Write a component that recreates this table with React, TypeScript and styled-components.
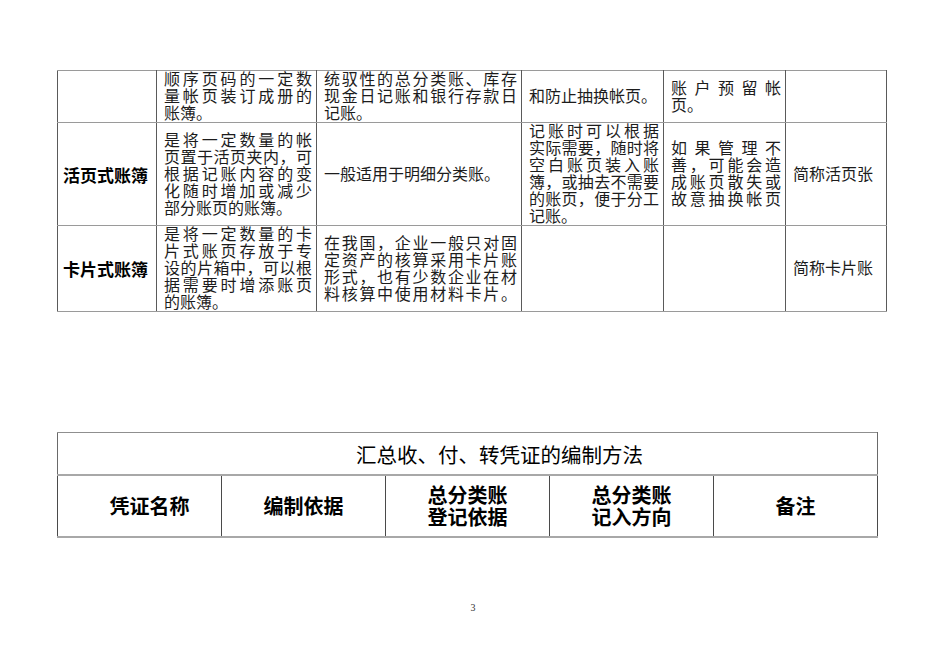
import React from "react";
import styled, { createGlobalStyle } from "styled-components";

const GlobalStyle = createGlobalStyle`
    html, body {
        margin: 0;
        padding: 0;
        background: #ffffff;
    }
    body {
        font-family: "Liberation Serif", "Noto Sans CJK SC", serif;
        color: #111111;
    }
`;

const Page = styled.div`
    width: 950px;
    min-height: 672px;
    padding-top: 70px;
    box-sizing: border-box;
    display: flex;
    flex-direction: column;
`;

const LedgerTable = styled.table`
    margin-left: 57px;
    width: 829px;
    border-collapse: collapse;
    table-layout: fixed;
`;

const Row = styled.tr<{ $h: number }>`
    height: ${(p) => p.$h}px;
`;

const Cell = styled.td`
    border-top: 1px solid #9a9a9a;
    border-bottom: 1px solid #9a9a9a;
    border-left: 1px solid #5a5a5a;
    border-right: 1px solid #5a5a5a;
    padding: 0 4px 0 7px;
    vertical-align: middle;
    font-family: "Liberation Serif", "Noto Sans CJK SC", serif;
    font-size: 16px;
    line-height: 17px;
    color: #1c1c1c;
`;

const LabelCell = styled(Cell)`
    padding-left: 5px;
    font-family: "Noto Sans CJK SC", sans-serif;
    font-size: 17px;
    font-weight: 700;
    color: #000000;
    white-space: nowrap;
`;

const Line = styled.div<{ $spread: boolean }>`
    white-space: nowrap;
    text-align: ${(p) => (p.$spread ? "justify" : "left")};
    text-align-last: ${(p) => (p.$spread ? "justify" : "left")};
`;

const MethodTable = styled.table`
    margin: 120px 0 0 57px;
    width: 821px;
    border-collapse: collapse;
    table-layout: fixed;
`;

const TitleCell = styled.th`
    height: 41px;
    border-top: 1px solid #8f8f8f;
    border-bottom: 2px solid #a8a8a8;
    border-left: 1px solid #6a6a6a;
    border-right: 1px solid #6a6a6a;
    padding: 0 0 0 64px;
    font-family: "Noto Sans CJK SC", sans-serif;
    font-size: 20.5px;
    font-weight: 400;
    color: #000000;
    text-align: center;
    vertical-align: middle;
`;

const HeadCell = styled.th<{ $indent?: number }>`
    height: 60px;
    border-bottom: 2px solid #a8a8a8;
    border-left: 1px solid #4a4a4a;
    border-right: 1px solid #4a4a4a;
    padding: 0 0 0 ${(p) => p.$indent ?? 0}px;
    font-family: "Noto Sans CJK SC", sans-serif;
    font-size: 20px;
    line-height: 22px;
    font-weight: 700;
    color: #000000;
    text-align: center;
    vertical-align: middle;
    white-space: pre-line;
`;

const PageNumber = styled.div`
    margin-top: 64px;
    padding-right: 4px;
    text-align: center;
    font-family: "Liberation Serif", serif;
    font-size: 10px;
    line-height: 12px;
    color: #333333;
`;

interface CellText {
    lines: string[];
    fill?: boolean;
}

interface LedgerRow {
    height: number;
    label: string;
    cells: CellText[];
}

const widths = [99, 160, 205, 142, 122, 101];

const ledgerRows: LedgerRow[] = [
    {
        height: 50,
        label: "",
        cells: [
            { lines: ["顺序页码的一定数", "量帐页装订成册的", "账簿。"] },
            { lines: ["统驭性的总分类账、库存", "现金日记账和银行存款日", "记账。"] },
            { lines: ["和防止抽换帐页。"] },
            { lines: ["账户预留帐", "页。"] },
            { lines: [] },
        ],
    },
    {
        height: 102,
        label: "活页式账簿",
        cells: [
            {
                lines: [
                    "是将一定数量的帐",
                    "页置于活页夹内，可",
                    "根据记账内容的变",
                    "化随时增加或减少",
                    "部分账页的账簿。",
                ],
            },
            { lines: ["一般适用于明细分类账。"] },
            {
                lines: [
                    "记账时可以根据",
                    "实际需要，随时将",
                    "空白账页装入账",
                    "簿，或抽去不需要",
                    "的账页，便于分工",
                    "记账。",
                ],
            },
            {
                lines: ["如果管理不", "善，可能会造", "成账页散失或", "故意抽换帐页"],
                fill: true,
            },
            { lines: ["简称活页张"] },
        ],
    },
    {
        height: 84,
        label: "卡片式账簿",
        cells: [
            {
                lines: [
                    "是将一定数量的卡",
                    "片式账页存放于专",
                    "设的片箱中，可以根",
                    "据需要时增添账页",
                    "的账簿。",
                ],
            },
            {
                lines: [
                    "在我国，企业一般只对固",
                    "定资产的核算采用卡片账",
                    "形式，也有少数企业在材",
                    "料核算中使用材料卡片。",
                ],
                fill: true,
            },
            { lines: [] },
            { lines: [] },
            { lines: ["简称卡片账"] },
        ],
    },
];

const headings = ["凭证名称", "编制依据", "总分类账\n登记依据", "总分类账\n记入方向", "备注"];

const App: React.FC = () => {
    return (
        <>
            <GlobalStyle />
            <Page>
                <LedgerTable>
                    <colgroup>
                        {widths.map((w, i) => (
                            <col key={i} style={{ width: w }} />
                        ))}
                    </colgroup>
                    <tbody>
                        {ledgerRows.map((row, r) => (
                            <Row key={r} $h={row.height}>
                                <LabelCell>{row.label}</LabelCell>
                                {row.cells.map((cell, c) => (
                                    <Cell key={c}>
                                        {cell.lines.map((line, i) => (
                                            <Line
                                                key={i}
                                                $spread={
                                                    cell.lines.length > 1 &&
                                                    (i < cell.lines.length - 1 || !!cell.fill)
                                                }
                                            >
                                                {line}
                                            </Line>
                                        ))}
                                    </Cell>
                                ))}
                            </Row>
                        ))}
                    </tbody>
                </LedgerTable>

                <MethodTable>
                    <thead>
                        <tr>
                            <TitleCell colSpan={5}>汇总收、付、转凭证的编制方法</TitleCell>
                        </tr>
                        <tr>
                            {headings.map((h, i) => (
                                <HeadCell key={i} $indent={i === 0 ? 20 : 0}>
                                    {h}
                                </HeadCell>
                            ))}
                        </tr>
                    </thead>
                </MethodTable>

                <PageNumber>3</PageNumber>
            </Page>
        </>
    );
};

export default App;
